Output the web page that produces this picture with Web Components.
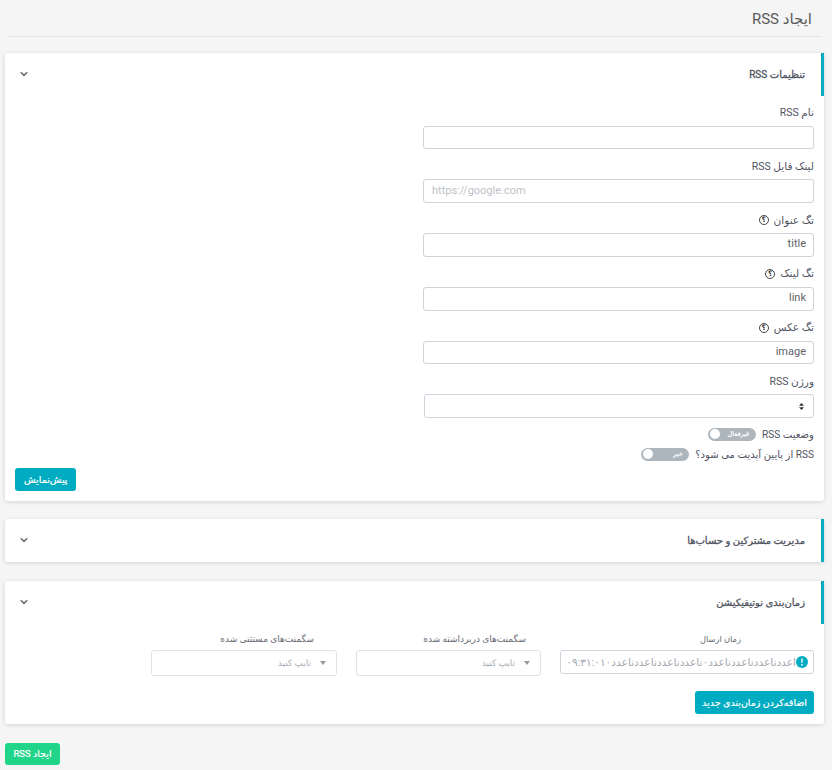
<!DOCTYPE html>
<html lang="fa" dir="rtl"><head><meta charset="utf-8">
<style>
html,body{margin:0;padding:0;background:#f5f5f5;overflow:hidden}
body{font:11px Roboto,"DejaVu Sans",sans-serif;color:#5e6278;height:770px;box-sizing:border-box;padding:0 8px 0 5px}
x-card+x-card{margin-top:18px}
x-card.last{margin-top:19px}
</style></head><body>
<template id="t-header"><style>
:host{display:block;height:36px;margin:0 3px 16px 3px;border-bottom:1px solid #e6e6e6}
div{font-size:15px;line-height:39px;color:#5a5a5a;padding-right:9px}
</style><div><slot></slot></div></template>
<template id="t-card"><style>
:host{display:block;background:#fff;border-radius:3px;box-shadow:0 1px 4px rgba(0,0,0,.14)}
header{height:43px;box-sizing:border-box;border-right:3px solid #00acc1;display:flex;align-items:center;justify-content:space-between;padding:0 16px 1px 15px}
h2{margin:0;font-size:10px;font-weight:400;-webkit-text-stroke:.3px currentColor;color:#50545f}
svg{display:block}
.b{padding:0 10px 10px}
:host([collapsed]) .b{display:none}
</style><header><h2><slot name="title"></slot></h2><svg width="8" height="6" viewBox="0 0 8 6"><path d="M.8 1.2 4 4.4 7.2 1.2" fill="none" stroke="#6b6b6b" stroke-width="1.5"/></svg></header><div class="b"><slot></slot></div></template>
<template id="t-field"><style>
:host{display:block;width:391px;height:53.7px}
label{display:flex;align-items:center;gap:5px;height:29.75px;font-size:10.5px;color:#50535f;padding-top:4px;box-sizing:border-box}
i{display:inline-flex;width:8px;height:8px;border:1px solid #444;border-radius:50%;align-items:center;justify-content:center;font:700 7.5px/8px "DejaVu Sans",sans-serif;color:#333}
:host(:not([help])) i{display:none}
</style><label><span><slot name="label"></slot></span><i>؟</i></label><slot></slot></template>
<template id="t-input"><style>
:host{display:flex;align-items:center;box-sizing:border-box;height:23.7px;background:#fff;border:1px solid #cfd3dc;border-radius:3px;padding:0 7px 2px 8px;font-size:11px;color:#5f6368}
:host([ph]){color:#bfc2c8;direction:ltr}
</style><slot></slot></template>
<template id="t-select"><style>
:host{display:flex;align-items:center;box-sizing:border-box;height:24px;margin-left:1px;background:#fff;border:1px solid #cfd3dc;border-radius:3px;padding:0 9px}
</style><svg width="5" height="7" viewBox="0 0 5 7"><path d="M2.5 0 5 2.8H0ZM2.5 7 0 4.2H5Z" fill="#333"/></svg></template>
<template id="t-toggle"><style>
:host{display:flex;align-items:center;gap:6.5px;height:20px;font-size:10.1px;color:#50535f}
.s{display:flex;align-items:center;width:48px;height:13px;border-radius:7px;background:#adb5bd;position:relative;color:#fff;font-size:6.5px;-webkit-text-stroke:.2px #fff;box-sizing:border-box;padding-right:6px}
.s::after{content:"";position:absolute;left:2px;top:1.5px;width:10px;height:10px;border-radius:50%;background:#fff}
</style><span><slot></slot></span><span class="s"><slot name="state"></slot></span></template>
<template id="t-btn"><style>
:host{display:inline-flex;align-items:center;justify-content:center;box-sizing:border-box;height:23px;padding:0 var(--px,9px);border-radius:3px;background:var(--bg,#00acc1);color:#fff;font-size:var(--fs,9.5px);font-weight:400;-webkit-text-stroke:.2px #fff}
</style><slot></slot></template>
<template id="t-combo"><style>
:host{display:block;font-size:9px;color:#666a73}
.l{display:block;height:26px;line-height:31px;padding-right:var(--lp,15px)}
.f{display:flex;align-items:center;gap:9px;box-sizing:border-box;height:26px;background:#fff;border:1px solid #e0e2e8;border-radius:3px;padding:0 10px;color:#a9acb4}
.t{width:0;height:0;border:3px solid transparent;border-top:4px solid #9a9a9a;border-bottom:0}
</style><span class="l"><slot name="label"></slot></span><div class="f"><span class="t"></span><slot></slot></div></template>
<template id="t-time"><style>
:host{display:block;font-size:8.3px;color:#666a73}
.l{display:block;height:26px;line-height:31px;padding-right:73px}
.f{display:flex;align-items:center;box-sizing:border-box;height:24px;background:#fff;border:1px solid #cfd3dc;border-radius:3px;padding:0 5px 0 7px;color:#a5a8b0;font-size:10.6px;white-space:nowrap;overflow:hidden}
svg{flex:none}
</style><span class="l"><slot name="label"></slot></span><div class="f"><svg width="12" height="12" viewBox="0 0 12 12"><circle cx="6" cy="6" r="6" fill="#00acc1"/><path d="M6 2.6v4.2" stroke="#fff" stroke-width="1.4"/><circle cx="6" cy="8.8" r=".9" fill="#fff"/></svg><slot></slot></div></template>
<template id="t-row"><style>
:host{display:flex;gap:19px;align-items:flex-start}
::slotted(:nth-child(1)){width:254px}
::slotted(:nth-child(2)){width:185px}
::slotted(:nth-child(3)){width:186px}
</style><slot></slot></template>

<x-header>ایجاد RSS</x-header>

<x-card>
<span slot="title">تنظیمات RSS</span>
<x-field><span slot="label">نام RSS</span><x-input></x-input></x-field>
<x-field><span slot="label">لینک فایل RSS</span><x-input ph>https://google.com</x-input></x-field>
<x-field help><span slot="label">تگ عنوان</span><x-input>title</x-input></x-field>
<x-field help><span slot="label">تگ لینک</span><x-input>link</x-input></x-field>
<x-field help><span slot="label">تگ عکس</span><x-input>image</x-input></x-field>
<x-field style="height:auto"><span slot="label">ورژن RSS</span><x-select></x-select></x-field>
<div style="height:6px"></div>
<x-toggle>وضعیت RSS<span slot="state">غیرفعال</span></x-toggle>
<x-toggle>RSS از پایین آپدیت می شود؟<span slot="state">خیر</span></x-toggle>
<div style="text-align:left;margin-top:4px;height:23px;line-height:0"><x-btn style="--px:9px">پیش‌نمایش</x-btn></div>
</x-card>

<x-card collapsed><span slot="title">مدیریت مشترکین و حساب‌ها</span></x-card>

<x-card class="last">
<span slot="title">زمان‌بندی نوتیفیکیشن</span>
<x-row>
<x-time><span slot="label">زمان ارسال</span>اعددناعددناعددناعدد۰ناعددناعددناعددناعدد۰۹:۳۱:۰۱۰</x-time>
<x-combo style="--lp:15px"><span slot="label">سگمنت‌های دربرداشته شده</span>تایپ کنید</x-combo>
<x-combo style="--lp:23px"><span slot="label">سگمنت‌های مستثنی شده</span>تایپ کنید</x-combo>
</x-row>
<div style="margin-top:15px;height:23px;line-height:0"><x-btn style="--px:7px">اضافه‌کردن زمان‌بندی جدید</x-btn></div>
</x-card>

<div style="text-align:left;margin-top:19px;line-height:0"><x-btn style="--bg:#20d489;height:22px;--px:8.5px">ایجاد RSS</x-btn></div>

<script>
const reg=(n,t)=>customElements.define(n,class extends HTMLElement{constructor(){super();this.attachShadow({mode:'open'}).appendChild(document.getElementById(t).content.cloneNode(true))}});
[['x-header','t-header'],['x-card','t-card'],['x-field','t-field'],['x-input','t-input'],['x-select','t-select'],['x-toggle','t-toggle'],['x-btn','t-btn'],['x-combo','t-combo'],['x-time','t-time'],['x-row','t-row']].forEach(a=>reg(...a));
</script>
</body></html>
